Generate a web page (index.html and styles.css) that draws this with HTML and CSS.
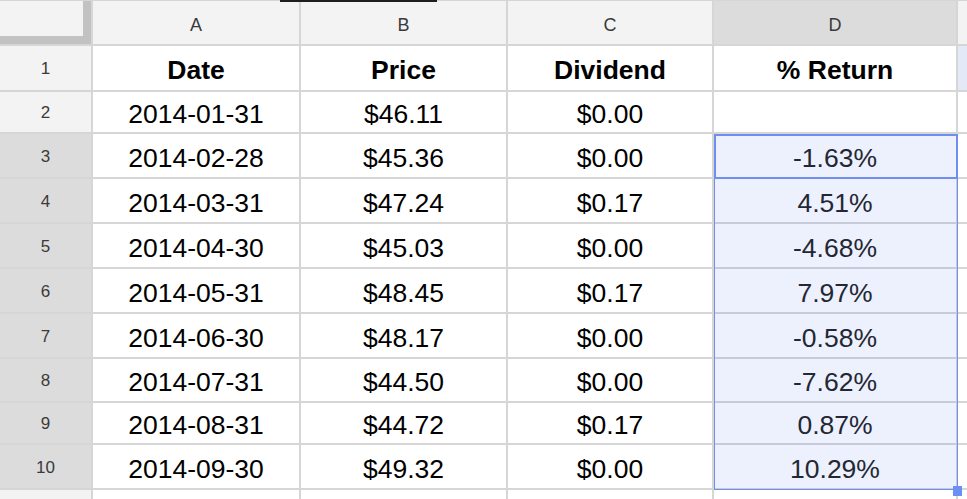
FILE: index.html
```html
<!DOCTYPE html>
<html>
<head>
<meta charset="utf-8">
<link rel="stylesheet" href="styles.css">
</head>
<body>
<div class="sheet">
  <div class="grid">
    <div class="corner"></div>
    <div class="colhead">A</div>
    <div class="colhead">B</div>
    <div class="colhead">C</div>
    <div class="colhead sel">D</div>
    <div class="colhead"></div>

    <div class="rowhead">1</div>
    <div class="cell bold">Date</div>
    <div class="cell bold">Price</div>
    <div class="cell bold">Dividend</div>
    <div class="cell bold">% Return</div>
    <div class="cell tint"></div>

    <div class="rowhead">2</div>
    <div class="cell">2014-01-31</div>
    <div class="cell">$46.11</div>
    <div class="cell">$0.00</div>
    <div class="cell"></div>
    <div class="cell"></div>

    <div class="rowhead sel">3</div>
    <div class="cell">2014-02-28</div>
    <div class="cell">$45.36</div>
    <div class="cell">$0.00</div>
    <div class="cell num">-1.63%</div>
    <div class="cell"></div>

    <div class="rowhead sel">4</div>
    <div class="cell">2014-03-31</div>
    <div class="cell">$47.24</div>
    <div class="cell">$0.17</div>
    <div class="cell num">4.51%</div>
    <div class="cell"></div>

    <div class="rowhead sel">5</div>
    <div class="cell">2014-04-30</div>
    <div class="cell">$45.03</div>
    <div class="cell">$0.00</div>
    <div class="cell num">-4.68%</div>
    <div class="cell"></div>

    <div class="rowhead sel">6</div>
    <div class="cell">2014-05-31</div>
    <div class="cell">$48.45</div>
    <div class="cell">$0.17</div>
    <div class="cell num">7.97%</div>
    <div class="cell"></div>

    <div class="rowhead sel">7</div>
    <div class="cell">2014-06-30</div>
    <div class="cell">$48.17</div>
    <div class="cell">$0.00</div>
    <div class="cell num">-0.58%</div>
    <div class="cell"></div>

    <div class="rowhead sel">8</div>
    <div class="cell">2014-07-31</div>
    <div class="cell">$44.50</div>
    <div class="cell">$0.00</div>
    <div class="cell num">-7.62%</div>
    <div class="cell"></div>

    <div class="rowhead sel">9</div>
    <div class="cell">2014-08-31</div>
    <div class="cell">$44.72</div>
    <div class="cell">$0.17</div>
    <div class="cell num">0.87%</div>
    <div class="cell"></div>

    <div class="rowhead sel">10</div>
    <div class="cell">2014-09-30</div>
    <div class="cell">$49.32</div>
    <div class="cell">$0.00</div>
    <div class="cell num">10.29%</div>
    <div class="cell"></div>

    <div class="rowhead"></div>
    <div class="cell"></div>
    <div class="cell"></div>
    <div class="cell"></div>
    <div class="cell"></div>
    <div class="cell"></div>
  </div>
  <div class="topbar"></div>
  <div class="range"></div>
  <div class="active"></div>
  <div class="handle"></div>
</div>
</body>
</html>
```

FILE: styles.css
```css
html, body {
  margin: 0;
  padding: 0;
  background: #ffffff;
  overflow: hidden;
}

.sheet {
  position: relative;
  width: 967px;
  height: 499px;
  overflow: hidden;
  font-family: "Liberation Sans", Arial, sans-serif;
}

.grid {
  display: grid;
  grid-template-columns: 91px 206px 205px 204px 242px 40px;
  grid-template-rows: 43px 44px 40px 43px 43px 43px 43px 43px 42px 40px 43px 20px;
  gap: 2px;
  padding-top: 1px;
  background: #d6d6d6;
  width: max-content;
}

.corner {
  background: #f3f3f3;
  border-right: 8px solid #c2c2c2;
  border-bottom: 8px solid #c2c2c2;
}

.colhead {
  background: #f3f3f3;
  color: #3a3a3a;
  font-size: 18px;
  display: flex;
  align-items: center;
  justify-content: center;
  padding-top: 5px;
}

.colhead.sel {
  background: #dcdcdc;
}

.rowhead {
  background: #f3f3f3;
  color: #3a3a3a;
  font-size: 17px;
  display: flex;
  align-items: center;
  justify-content: center;
  padding-top: 2px;
}

.rowhead.sel {
  background: #dcdcdc;
}

.cell {
  background: #ffffff;
  color: #000000;
  font-size: 26.5px;
  display: flex;
  align-items: center;
  justify-content: center;
  padding-top: 5px;
  white-space: nowrap;
}

.cell.bold {
  font-weight: bold;
}

.cell.num {
  color: #222222;
}

.cell.tint {
  background: #e3e9f6;
}

.topbar {
  position: absolute;
  left: 280px;
  top: 0;
  width: 157px;
  height: 2px;
  background: #1e1e1e;
}

.range {
  position: absolute;
  left: 714px;
  top: 134px;
  width: 244px;
  height: 356px;
  box-sizing: border-box;
  border: 1px solid #6f8ff0;
  background: rgba(50, 100, 235, 0.09);
}

.active {
  position: absolute;
  left: 714px;
  top: 134px;
  width: 244px;
  height: 45px;
  box-sizing: border-box;
  border: 2px solid #6f8ff0;
}

.handle {
  position: absolute;
  left: 953px;
  top: 486px;
  width: 9px;
  height: 10px;
  background: #6d8ef3;
}
```
